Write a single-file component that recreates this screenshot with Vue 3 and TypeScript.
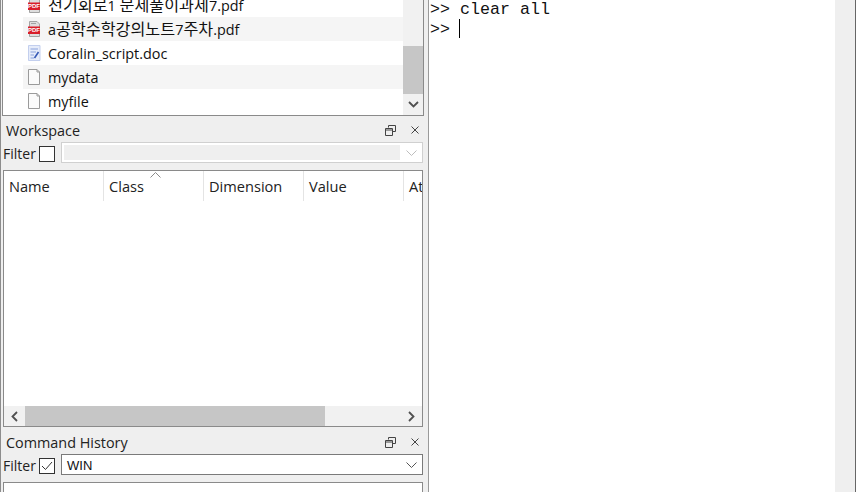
<script setup lang="ts">
interface Segment { text: string; cjk: boolean }
interface FileRow { name: string; kind: 'pdf' | 'doc' | 'plain' }
const files: FileRow[] = [
  { name: '전기회로1 문제풀이과제7.pdf', kind: 'pdf' },
  { name: 'a공학수학강의노트7주차.pdf', kind: 'pdf' },
  { name: 'Coralin_script.doc', kind: 'doc' },
  { name: 'mydata', kind: 'plain' },
  { name: 'myfile', kind: 'plain' },
]
const columns = ['Name', 'Class', 'Dimension', 'Value', 'Attributes']

function segments(name: string): Segment[] {
  const parts = name.match(/[\uac00-\ud7a3]+|[^\uac00-\ud7a3]+/g) ?? []
  return parts.map((text) => ({ text, cjk: /[\uac00-\ud7a3]/.test(text) }))
}
</script>

<template>
  <div class="page">
    <aside class="left">
      <section class="filebox">
        <div class="filelist">
          <div v-for="(f, i) in files" :key="f.name" class="row" :class="{ alt: i % 2 === 1 }">
            <svg class="ficon" width="13" height="16" viewBox="0 0 13 16">
              <template v-if="f.kind === 'pdf'">
                <path d="M1.5 .5H9L11.5 3V15.5H1.5Z" fill="#dedede" stroke="#a3a3a3" />
                <path d="M3 2.5H8" stroke="#a3a3a3" />
                <rect x="0" y="5.5" width="12" height="7.5" fill="#d81e2a" />
                <text x="6" y="11.2" text-anchor="middle" class="pdf-label">PDF</text>
              </template>
              <template v-else-if="f.kind === 'doc'">
                <path d="M.5 .5H12V15.5H.5Z" fill="#e6ecfa" stroke="#c3cfee" />
                <path d="M2.5 4H10M2.5 7H8M2.5 10H6M2.5 13H6" stroke="#8aa2dc" />
                <path d="M6.5 13L10.5 7" stroke="#3558b5" stroke-width="1.6" />
              </template>
              <template v-else>
                <path d="M.5 .5H9L11.5 3V15.5H.5Z" fill="#fbfbfb" stroke="#9b9b9b" />
                <path d="M9 .5V3H11.5" fill="none" stroke="#9b9b9b" />
              </template>
            </svg>
            <span class="fname"><span v-for="(s, j) in segments(f.name)" :key="j" :class="{ cjk: s.cjk }">{{ s.text }}</span></span>
          </div>
        </div>
        <div class="vscroll">
          <div class="vspace"></div>
          <div class="vthumb"></div>
          <div class="varrow">
            <svg width="11" height="7" viewBox="0 0 11 7"><path d="M1 1L5.5 5.5L10 1" fill="none" stroke="#505050" stroke-width="1.8" /></svg>
          </div>
        </div>
      </section>

      <header class="title title-ws">
        <span>Workspace</span>
        <div class="tools">
          <svg width="11" height="11" viewBox="0 0 11 11"><path d="M3.5 2.5V.5H10.5V6.5H7.5M.5 3.5H7.5V10.5H.5ZM.5 5H7.5" fill="none" stroke="#444" /></svg>
          <svg width="8" height="8" viewBox="0 0 8 8"><path d="M.5 .5L7.5 7.5M7.5 .5L.5 7.5" fill="none" stroke="#444" /></svg>
        </div>
      </header>
      <div class="filter">
        <span class="flabel">Filter</span>
        <span class="check"></span>
        <div class="combo disabled">
          <span class="combo-fill"></span>
          <svg width="11" height="6" viewBox="0 0 11 6"><path d="M.5 .5L5.5 5.5L10.5 .5" fill="none" stroke="#bdbdbd" /></svg>
        </div>
      </div>

      <section class="table">
        <div class="thead">
          <div v-for="c in columns" :key="c" class="th">{{ c }}</div>
          <svg class="sort" width="11" height="6" viewBox="0 0 11 6"><path d="M.5 5.5L5.5 .5L10.5 5.5" fill="none" stroke="#8a8a8a" /></svg>
        </div>
        <div class="tbody"></div>
        <div class="hscroll">
          <svg class="harrow" width="7" height="11" viewBox="0 0 7 11"><path d="M6 1L1.5 5.5L6 10" fill="none" stroke="#505050" stroke-width="1.8" /></svg>
          <div class="hthumb"></div>
          <svg class="harrow" width="7" height="11" viewBox="0 0 7 11"><path d="M1 1L5.5 5.5L1 10" fill="none" stroke="#505050" stroke-width="1.8" /></svg>
        </div>
      </section>

      <header class="title title-ch">
        <span>Command History</span>
        <div class="tools">
          <svg width="11" height="11" viewBox="0 0 11 11"><path d="M3.5 2.5V.5H10.5V6.5H7.5M.5 3.5H7.5V10.5H.5ZM.5 5H7.5" fill="none" stroke="#444" /></svg>
          <svg width="8" height="8" viewBox="0 0 8 8"><path d="M.5 .5L7.5 7.5M7.5 .5L.5 7.5" fill="none" stroke="#444" /></svg>
        </div>
      </header>
      <div class="filter">
        <span class="flabel">Filter</span>
        <span class="check">
          <svg width="14" height="14" viewBox="0 0 14 14"><path d="M2 7L5.5 10.5L12 3" fill="none" stroke="#333" /></svg>
        </span>
        <div class="combo">
          <span class="combo-text">WIN</span>
          <svg width="11" height="6" viewBox="0 0 11 6"><path d="M.5 .5L5.5 5.5L10.5 .5" fill="none" stroke="#555" /></svg>
        </div>
      </div>
      <div class="history"></div>
    </aside>

    <main class="console">
      <div class="line">&gt;&gt; clear all</div>
      <div class="line">&gt;&gt; <span class="caret"></span></div>
    </main>
    <div class="gutter"></div>
  </div>
</template>

<style>
html, body { margin: 0; padding: 0; background: #efefef; }
</style>

<style scoped>
.page {
  width: 856px;
  height: 492px;
  overflow: hidden;
  display: flex;
  background: #efefef;
  font-family: "Open Sans", "Noto Sans CJK KR", sans-serif;
  color: #111;
}
.left {
  width: 424px;
  flex: none;
  display: flex;
  flex-direction: column;
  box-sizing: border-box;
  border-left: 1px solid #8d8d8d;
}
.filebox {
  height: 116px;
  flex: none;
  width: 422px;
  margin-left: 1px;
  box-sizing: border-box;
  border: 1px solid #8a8a8a;
  border-top: 0;
  background: #fff;
  display: flex;
  overflow: hidden;
}
.filelist {
  flex: 1;
  min-width: 0;
  display: flex;
  flex-direction: column;
  justify-content: flex-end;
  padding: 0 0 2px 20px;
}
.row {
  height: 24px;
  flex: none;
  display: flex;
  align-items: center;
  gap: 7px;
  padding-left: 5px;
  font-size: 14.4px;
}
.row.alt { background: #f5f5f5; }
.ficon { flex: none; }
.pdf-label { font: 700 6px "Liberation Sans", sans-serif; fill: #fff; }
.fname { white-space: nowrap; line-height: 20px; padding-top: 2px; }
.cjk { font-size: 16.2px; line-height: 0; }
.vscroll {
  width: 20px;
  flex: none;
  background: #f1f1f1;
  display: flex;
  flex-direction: column;
}
.vspace { height: 46px; }
.vthumb { height: 48px; background: #c6c6c6; }
.varrow { flex: 1; display: flex; align-items: center; justify-content: center; }
.title {
  flex: none;
  display: flex;
  justify-content: space-between;
  align-items: center;
  font-size: 14.4px;
  color: #222;
  padding: 0 5px 0 5px;
  width: 423px;
  box-sizing: border-box;
}
.title-ws { height: 25px; margin-top: 1px; padding-top: 1px; }
.title-ch { height: 27px; padding-top: 3px; }
.tools { display: flex; align-items: center; gap: 15px; }
.filter {
  flex: none;
  height: 22px;
  display: flex;
  align-items: flex-start;
  width: 422px;
}
.flabel { font-size: 14px; width: 38px; padding: 2px 0 0 2px; box-sizing: border-box; color: #222; }
.check {
  width: 14px;
  height: 14px;
  margin-top: 4px;
  border: 1px solid #333;
  background: #fff;
  display: flex;
  flex: none;
}
.combo {
  margin-left: 6px;
  flex: 1;
  height: 21px;
  box-sizing: border-box;
  border: 1px solid #7a7a7a;
  background: #fff;
  display: flex;
  align-items: center;
  justify-content: space-between;
  padding-right: 5px;
  font-size: 14px;
}
.combo.disabled { border: 1px solid #d0d0d0; padding: 2px 5px 2px 2px; }
.combo-fill { width: 336px; height: 100%; background: #efefef; }
.combo-text { padding: 1px 0 0 5px; font-family: "Liberation Sans", sans-serif; font-size: 13px; }
.table {
  margin-top: 6px;
  margin-left: 2px;
  width: 420px;
  height: 257px;
  flex: none;
  box-sizing: border-box;
  border: 1px solid #8a8a8a;
  background: #fff;
  display: flex;
  flex-direction: column;
  overflow: hidden;
}
.thead {
  position: relative;
  height: 30px;
  flex: none;
  display: flex;
  overflow: hidden;
}
.th {
  width: 100px;
  flex: none;
  box-sizing: border-box;
  padding: 5px 0 0 5px;
  font-size: 14.6px;
  color: #222;
  white-space: nowrap;
  border-right: 1px solid #e4e4e4;
}
.sort { position: absolute; left: 146px; top: 1px; }
.tbody { flex: 1; }
.hscroll {
  height: 20px;
  flex: none;
  background: #f1f1f1;
  display: flex;
  align-items: center;
  padding: 0 7px;
}
.harrow { flex: none; }
.hthumb { width: 300px; height: 100%; margin: 0 auto 0 7px; background: #c6c6c6; }
.history {
  margin-top: 6px;
  margin-left: 2px;
  width: 420px;
  flex: 1;
  box-sizing: border-box;
  border: 1px solid #8a8a8a;
  border-bottom: 0;
  background: #fff;
}
.console {
  width: 407px;
  margin-left: 4px;
  padding-left: 1px;
  flex: none;
  background: #fff;
  border-left: 1px solid #9a9a9a;
  box-sizing: border-box;
  font-family: "Liberation Mono", monospace;
  font-size: 16.67px;
  color: #111;
}
.line { height: 19px; line-height: 19px; white-space: pre; }
.line + .line { margin-top: 1px; }
.caret {
  display: inline-block;
  width: 1px;
  height: 19px;
  margin: -2px 0 0 -1px;
  background: #000;
  vertical-align: -4px;
}
.gutter {
  width: 20px;
  flex: none;
  border-right: 1px solid #666;
}
</style>
